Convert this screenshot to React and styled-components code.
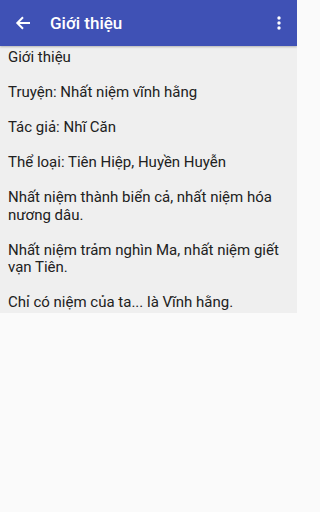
import React from 'react';
import styled, { createGlobalStyle } from 'styled-components';

const GlobalStyle = createGlobalStyle`
  html, body {
    margin: 0;
    padding: 0;
    background: #fafafa;
  }
  body {
    font-family: Roboto, "Noto Sans", sans-serif;
  }
`;

const Screen = styled.div`
  width: 297px;
  height: 512px;
  display: flex;
  flex-direction: column;
  background: #fafafa;
  overflow: hidden;
`;

const Toolbar = styled.header`
  height: 46px;
  flex-shrink: 0;
  display: flex;
  align-items: center;
  background: #3f51b5;
  color: #fff;
  box-shadow: 0 1px 2px rgba(0, 0, 0, 0.25);
  position: relative;
  z-index: 1;
`;

const IconButton = styled.button`
  border: none;
  background: transparent;
  padding: 0;
  width: ${p => p.width}px;
  height: 46px;
  display: flex;
  align-items: center;
  justify-content: center;
  color: inherit;
`;

const Title = styled.h1`
  flex: 1;
  margin: 0 0 0 4px;
  font-size: 17px;
  font-weight: 500;
  letter-spacing: 0;
`;

const Body = styled.div`
  background: #efefef;
  padding: 3px 8px 1px;
  color: #212121;
  font-size: 15px;
  line-height: 17.5px;
  white-space: pre-line;
`;

const content = `Giới thiệu

Truyện: Nhất niệm vĩnh hằng

Tác giả: Nhĩ Căn

Thể loại: Tiên Hiệp, Huyền Huyễn

Nhất niệm thành biển cả, nhất niệm hóa nương dâu.

Nhất niệm trảm nghìn Ma, nhất niệm giết vạn Tiên.

Chỉ có niệm của ta... là Vĩnh hằng.`;

export default function App() {
  return (
    <Screen>
      <GlobalStyle />
      <Toolbar>
        <IconButton width={46}>
          <svg width="16" height="16" viewBox="0 0 16 16" fill="none">
            <path d="M15 8H2.5M8 2.3L2.3 8L8 13.7" stroke="#fff" strokeWidth="2" />
          </svg>
        </IconButton>
        <Title>Giới thiệu</Title>
        <IconButton width={36}>
          <svg width="4" height="14" viewBox="0 0 4 14">
            <circle cx="2" cy="2" r="1.7" fill="#fff" />
            <circle cx="2" cy="7" r="1.7" fill="#fff" />
            <circle cx="2" cy="12" r="1.7" fill="#fff" />
          </svg>
        </IconButton>
      </Toolbar>
      <Body>{content}</Body>
    </Screen>
  );
}
